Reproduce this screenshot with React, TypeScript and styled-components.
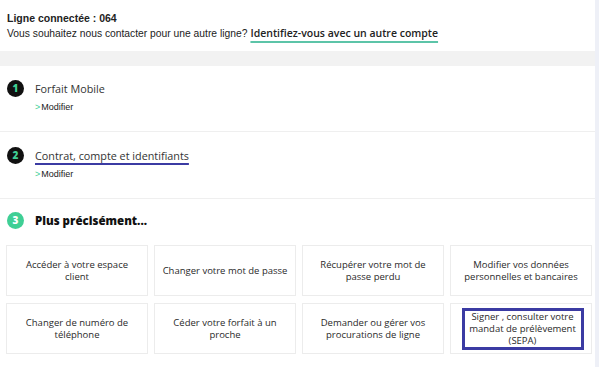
import React from 'react';
import styled, { createGlobalStyle } from 'styled-components';

const colors = {
  text: '#222222',
  teal: '#3fcf95',
  tealLine: '#5cc4a8',
  indigo: '#3b3ba3',
  band: '#f2f2f2',
  line: '#efefef',
  side: '#eef0f7',
};

const GlobalStyle = createGlobalStyle`
  body {
    margin: 0;
    background: ${colors.side};
    font-family: "Liberation Sans", Arial, sans-serif;
    color: ${colors.text};
  }
`;

const Page = styled.div`
  width: 595px;
  min-height: 367px;
  background: #ffffff;
`;

const Header = styled.header`
  box-sizing: border-box;
  height: 51px;
  padding: 10px 7px 0;
  font-size: 10.3px;
  line-height: 16px;
`;

const Connected = styled.div`
  font-weight: bold;
  font-size: 10.5px;
`;

const SwitchLink = styled.a`
  font-family: "Open Sans", sans-serif;
  font-weight: 600;
  font-size: 10.5px;
  line-height: 1;
  color: ${colors.text};
  text-decoration: underline;
  text-decoration-color: ${colors.tealLine};
  text-decoration-thickness: 2px;
  text-underline-offset: 4px;
  margin-left: 3px;
`;

const Band = styled.div`
  height: 15px;
  background: ${colors.band};
`;

const Step = styled.section<{ $height?: number; $top: number }>`
  box-sizing: border-box;
  height: ${(p) => (p.$height ? `${p.$height}px` : 'auto')};
  padding: ${(p) => p.$top}px 0 0 7px;
  border-bottom: 1px solid ${colors.line};

  &:last-child {
    border-bottom: none;
  }
`;

const StepRow = styled.div`
  display: flex;
  align-items: flex-start;
  gap: 11px;
`;

const Badge = styled.span<{ $active?: boolean }>`
  flex: 0 0 17px;
  width: 17px;
  height: 17px;
  border-radius: 50%;
  background: ${(p) => (p.$active ? colors.teal : '#111111')};
  color: ${(p) => (p.$active ? '#ffffff' : colors.teal)};
  font-family: "Open Sans", sans-serif;
  font-weight: 800;
  font-size: 10px;
  line-height: 17px;
  text-align: center;
`;

const StepBody = styled.div`
  display: flex;
  flex-direction: column;
`;

const StepTitle = styled.span<{ $current?: boolean }>`
  font-family: "Open Sans", sans-serif;
  font-size: 10.8px;
  line-height: 17px;
  color: #333333;
  ${(p) =>
    p.$current &&
    `
    text-decoration: underline;
    text-decoration-color: ${colors.indigo};
    text-decoration-thickness: 2px;
    text-underline-offset: 3px;
  `}
`;

const Heading = styled.h3`
  margin: 0;
  font-family: "Open Sans", sans-serif;
  font-weight: 800;
  font-size: 11.5px;
  line-height: 17px;
  color: #111111;
`;

const EditLink = styled.a`
  margin-top: 4px;
  font-size: 9px;
  line-height: 12px;
  color: ${colors.text};

  &::before {
    content: '>';
    color: ${colors.teal};
    margin-right: 1px;
  }
`;

const Grid = styled.div`
  display: grid;
  grid-template-columns: repeat(4, 1fr);
  gap: 7px 6px;
  width: 586px;
  margin: 16px 0 0 -1px;
`;

const Card = styled.a`
  box-sizing: border-box;
  height: 51px;
  display: flex;
  align-items: center;
  justify-content: center;
  padding: 0 6px;
  border: 1px solid #ececec;
  background: #ffffff;
  text-align: center;
  font-family: "Open Sans", sans-serif;
  font-size: 9.5px;
  line-height: 12px;
  color: #2a2a2a;
`;

const Focused = styled.span`
  display: block;
  width: 122px;
  box-sizing: border-box;
  margin-left: 3px;
  padding: 0 4px;
  border: 3px solid ${colors.indigo};
`;

const actions = [
  'Accéder à votre espace client',
  'Changer votre mot de passe',
  'Récupérer votre mot de passe perdu',
  'Modifier vos données personnelles et bancaires',
  'Changer de numéro de téléphone',
  'Céder votre forfait à un proche',
  'Demander ou gérer vos procurations de ligne',
];

const App = () => (
  <>
    <GlobalStyle />
    <Page>
      <Header>
        <Connected>Ligne connectée : 064</Connected>
        <div>
          Vous souhaitez nous contacter pour une autre ligne?
          <SwitchLink>Identifiez-vous avec un autre compte</SwitchLink>
        </div>
      </Header>
      <Band />

      <Step $height={66} $top={14}>
        <StepRow>
          <Badge>1</Badge>
          <StepBody>
            <StepTitle>Forfait Mobile</StepTitle>
            <EditLink>Modifier</EditLink>
          </StepBody>
        </StepRow>
      </Step>

      <Step $height={67} $top={15}>
        <StepRow>
          <Badge>2</Badge>
          <StepBody>
            <StepTitle $current>Contrat, compte et identifiants</StepTitle>
            <EditLink>Modifier</EditLink>
          </StepBody>
        </StepRow>
      </Step>

      <Step $top={13}>
        <StepRow>
          <Badge $active>3</Badge>
          <Heading>Plus précisément...</Heading>
        </StepRow>
        <Grid>
          {actions.map((label) => (
            <Card key={label}>{label}</Card>
          ))}
          <Card>
            <Focused>Signer , consulter votre mandat de prélèvement (SEPA)</Focused>
          </Card>
        </Grid>
      </Step>
    </Page>
  </>
);

export default App;
